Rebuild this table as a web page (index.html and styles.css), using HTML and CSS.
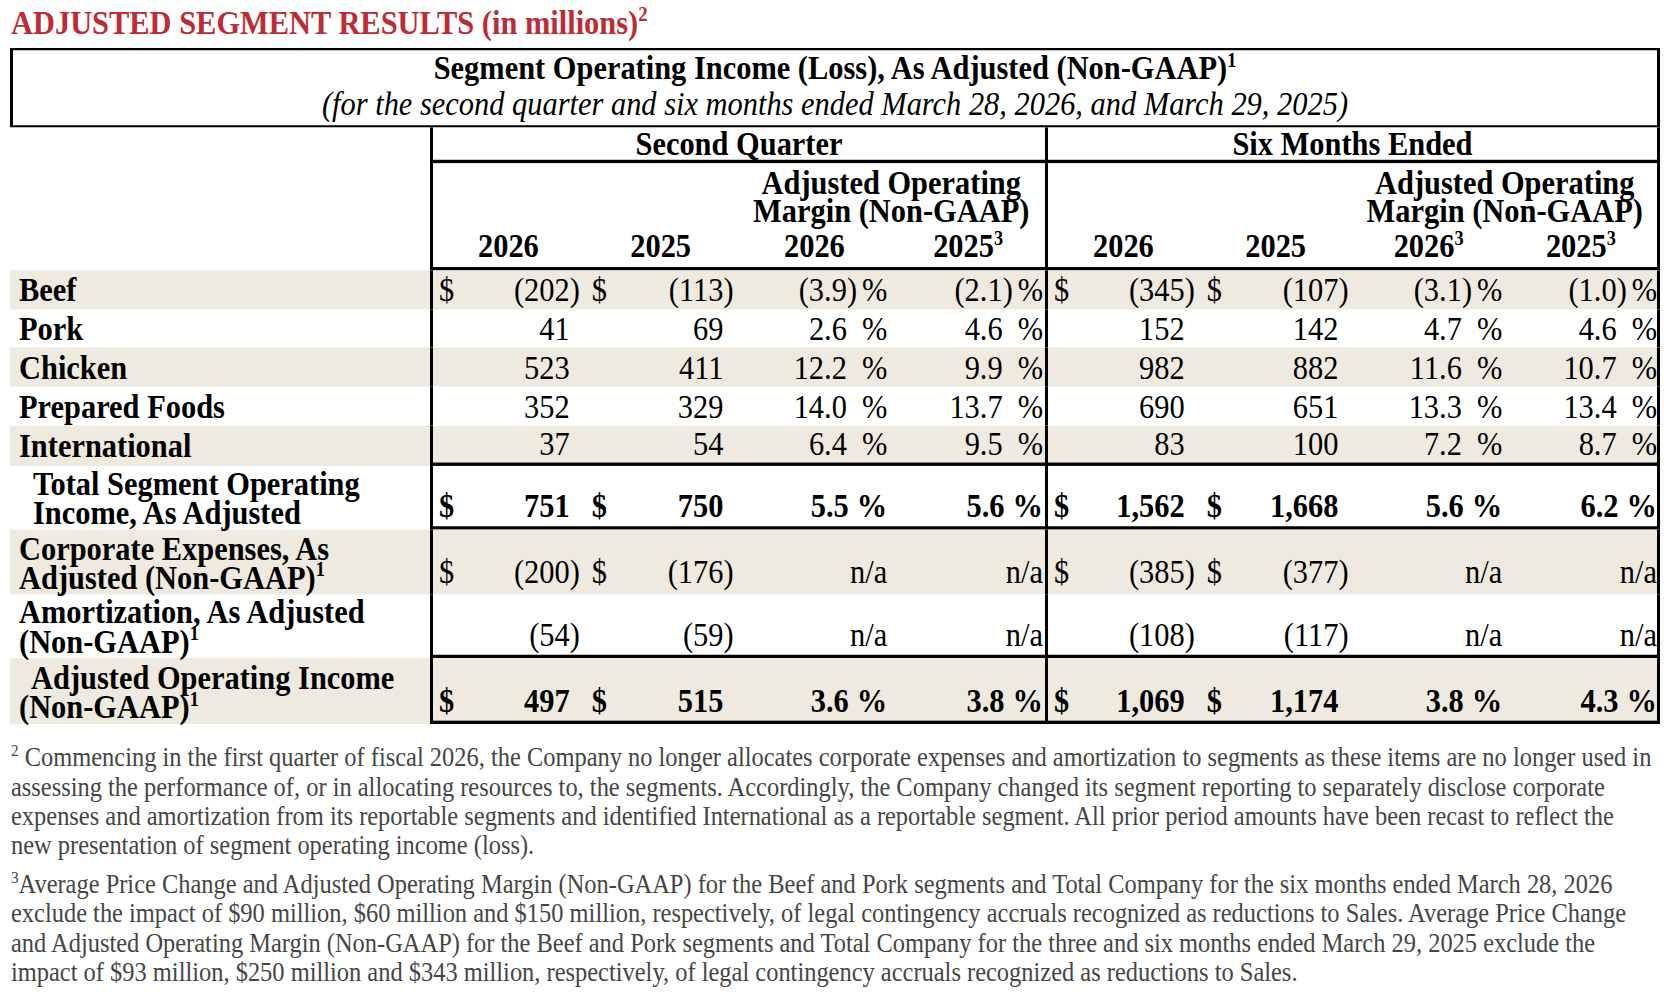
FILE: index.html
```html
<!DOCTYPE html>
<html lang="en">
<head>
<meta charset="utf-8">
<title>Adjusted Segment Results</title>
<link rel="stylesheet" href="styles.css">
</head>
<body>
<div class="page">
  <h1 class="title">ADJUSTED SEGMENT RESULTS (in millions)<sup>2</sup></h1>
  <table class="seg">
    <colgroup>
      <col class="c-label">
      <col class="c-num"><col class="c-num"><col class="c-num"><col class="c-num">
      <col class="c-num"><col class="c-num"><col class="c-num"><col class="c-num">
    </colgroup>
    <tr class="r-title">
      <td colspan="9" class="box">
        <div class="box-main">Segment Operating Income (Loss), As Adjusted (Non-GAAP)<sup>1</sup></div>
        <div class="box-sub">(for the second quarter and six months ended March 28, 2026, and March 29, 2025)</div>
      </td>
    </tr>
    <tr class="r-period">
      <td class="lbl"></td>
      <th colspan="4" class="period bl">Second Quarter</th>
      <th colspan="4" class="period bl br">Six Months Ended</th>
    </tr>
    <tr class="r-years">
      <td class="lbl"></td>
      <th class="yr bl">2026</th>
      <th class="yr">2025</th>
      <th colspan="2" class="yr">
        <div class="mg-title">Adjusted Operating<br>Margin (Non-GAAP)</div>
        <div class="mg-years"><span>2026</span><span>2025<sup>3</sup></span></div>
      </th>
      <th class="yr bl">2026</th>
      <th class="yr">2025</th>
      <th colspan="2" class="yr br">
        <div class="mg-title">Adjusted Operating<br>Margin (Non-GAAP)</div>
        <div class="mg-years"><span>2026<sup>3</sup></span><span>2025<sup>3</sup></span></div>
      </th>
    </tr>

    <tr class="row shade">
      <td class="lbl">Beef</td>
      <td class="amt bl"><span class="cur">$</span>(202<span class="rp">)</span></td>
      <td class="amt"><span class="cur">$</span>(113<span class="rp">)</span></td>
      <td class="mg"><span class="v">(3.9<span class="rp">)</span></span>%</td>
      <td class="mg end"><span class="v">(2.1<span class="rp">)</span></span>%</td>
      <td class="amt bl"><span class="cur">$</span>(345<span class="rp">)</span></td>
      <td class="amt"><span class="cur">$</span>(107<span class="rp">)</span></td>
      <td class="mg"><span class="v">(3.1<span class="rp">)</span></span>%</td>
      <td class="mg end br"><span class="v">(1.0<span class="rp">)</span></span>%</td>
    </tr>
    <tr class="row">
      <td class="lbl">Pork</td>
      <td class="amt bl">41</td>
      <td class="amt">69</td>
      <td class="mg"><span class="v">2.6</span>%</td>
      <td class="mg end"><span class="v">4.6</span>%</td>
      <td class="amt bl">152</td>
      <td class="amt">142</td>
      <td class="mg"><span class="v">4.7</span>%</td>
      <td class="mg end br"><span class="v">4.6</span>%</td>
    </tr>
    <tr class="row shade">
      <td class="lbl">Chicken</td>
      <td class="amt bl">523</td>
      <td class="amt">411</td>
      <td class="mg"><span class="v">12.2</span>%</td>
      <td class="mg end"><span class="v">9.9</span>%</td>
      <td class="amt bl">982</td>
      <td class="amt">882</td>
      <td class="mg"><span class="v">11.6</span>%</td>
      <td class="mg end br"><span class="v">10.7</span>%</td>
    </tr>
    <tr class="row">
      <td class="lbl">Prepared Foods</td>
      <td class="amt bl">352</td>
      <td class="amt">329</td>
      <td class="mg"><span class="v">14.0</span>%</td>
      <td class="mg end"><span class="v">13.7</span>%</td>
      <td class="amt bl">690</td>
      <td class="amt">651</td>
      <td class="mg"><span class="v">13.3</span>%</td>
      <td class="mg end br"><span class="v">13.4</span>%</td>
    </tr>
    <tr class="row shade sep r-last">
      <td class="lbl">International</td>
      <td class="amt bl">37</td>
      <td class="amt">54</td>
      <td class="mg"><span class="v">6.4</span>%</td>
      <td class="mg end"><span class="v">9.5</span>%</td>
      <td class="amt bl">83</td>
      <td class="amt">100</td>
      <td class="mg"><span class="v">7.2</span>%</td>
      <td class="mg end br"><span class="v">8.7</span>%</td>
    </tr>

    <tr class="tall sep strong">
      <td class="lbl ind">Total Segment Operating<br>Income, As Adjusted</td>
      <td class="amt bl"><span class="cur">$</span>751</td>
      <td class="amt"><span class="cur">$</span>750</td>
      <td class="mg"><span class="v">5.5</span>%</td>
      <td class="mg end"><span class="v">5.6</span>%</td>
      <td class="amt bl"><span class="cur">$</span>1,562</td>
      <td class="amt"><span class="cur">$</span>1,668</td>
      <td class="mg"><span class="v">5.6</span>%</td>
      <td class="mg end br"><span class="v">6.2</span>%</td>
    </tr>
    <tr class="tall shade open">
      <td class="lbl">Corporate Expenses, As<br>Adjusted (Non-GAAP)<sup>1</sup></td>
      <td class="amt bl"><span class="cur">$</span>(200<span class="rp">)</span></td>
      <td class="amt"><span class="cur">$</span>(176<span class="rp">)</span></td>
      <td class="mg na">n/a</td>
      <td class="mg end na">n/a</td>
      <td class="amt bl"><span class="cur">$</span>(385<span class="rp">)</span></td>
      <td class="amt"><span class="cur">$</span>(377<span class="rp">)</span></td>
      <td class="mg na">n/a</td>
      <td class="mg end br na">n/a</td>
    </tr>
    <tr class="tall sep">
      <td class="lbl">Amortization, As Adjusted<br>(Non-GAAP)<sup>1</sup></td>
      <td class="amt bl">(54<span class="rp">)</span></td>
      <td class="amt">(59<span class="rp">)</span></td>
      <td class="mg na">n/a</td>
      <td class="mg end na">n/a</td>
      <td class="amt bl">(108<span class="rp">)</span></td>
      <td class="amt">(117<span class="rp">)</span></td>
      <td class="mg na">n/a</td>
      <td class="mg end br na">n/a</td>
    </tr>
    <tr class="tall sep strong shade r-final">
      <td class="lbl hang">Adjusted Operating Income<br>(Non-GAAP)<sup>1</sup></td>
      <td class="amt bl"><span class="cur">$</span>497</td>
      <td class="amt"><span class="cur">$</span>515</td>
      <td class="mg"><span class="v">3.6</span>%</td>
      <td class="mg end"><span class="v">3.8</span>%</td>
      <td class="amt bl"><span class="cur">$</span>1,069</td>
      <td class="amt"><span class="cur">$</span>1,174</td>
      <td class="mg"><span class="v">3.8</span>%</td>
      <td class="mg end br"><span class="v">4.3</span>%</td>
    </tr>
  </table>

  <div class="notes">
    <p><sup>2</sup> Commencing in the first quarter of fiscal 2026, the Company no longer allocates corporate expenses and amortization to segments as these items are no longer used in<br>assessing the performance of, or in allocating resources to, the segments. Accordingly, the Company changed its segment reporting to separately disclose corporate<br>expenses and amortization from its reportable segments and identified International as a reportable segment. All prior period amounts have been recast to reflect the<br>new presentation of segment operating income (loss).</p>
    <p><sup>3</sup>Average Price Change and Adjusted Operating Margin (Non-GAAP) for the Beef and Pork segments and Total Company for the six months ended March 28, 2026<br>exclude the impact of $90 million, $60 million and $150 million, respectively, of legal contingency accruals recognized as reductions to Sales. Average Price Change<br>and Adjusted Operating Margin (Non-GAAP) for the Beef and Pork segments and Total Company for the three and six months ended March 29, 2025 exclude the<br>impact of $93 million, $250 million and $343 million, respectively, of legal contingency accruals recognized as reductions to Sales.</p>
  </div>
</div>
</body>
</html>
```

FILE: styles.css
```css
* { box-sizing: border-box; }

:root {
  /* the source uses a tall, condensed Times face: text is set at its
     true width and the page is stretched vertically by --s */
  --s: 1.1173;
}

html, body {
  margin: 0;
  padding: 0;
  background: #ffffff;
}

body {
  font-family: "Liberation Serif", "Times New Roman", serif;
  color: #000000;
  min-height: 100vh;
}

.page {
  width: 1664px;
  padding: calc(3px / var(--s)) 0 0 10px;
  transform: scaleY(var(--s));
  transform-origin: 0 0;
}

sup {
  font-size: 60%;
  line-height: 0;
  vertical-align: super;
}

.title {
  margin: 0 0 calc(5px / var(--s)) 1px;
  font-size: 30.43px;
  line-height: calc(40px / var(--s));
  font-weight: bold;
  color: #bd2b36;
}

.title sup {
  font-size: 62%;
}

/* ---------- table ---------- */
.seg {
  width: 1650px;
  table-layout: fixed;
  border-collapse: separate;
  border-spacing: 0;
  font-size: 30.43px;
}

.c-label { width: 420px; }
.c-num { width: 153.75px; }

.seg td,
.seg th {
  padding: 0;
  font-weight: normal;
}

.seg .bl { border-left: 3px solid #000; }
.seg .br { border-right: 3px solid #000; }

/* title box */
.r-title { height: calc(79px / var(--s)); }

.seg .box {
  border: 3px solid #000;
  border-top-width: calc(3px / var(--s));
  border-bottom-width: calc(3px / var(--s));
  padding-top: calc(1px / var(--s));
  text-align: center;
  vertical-align: top;
}

.box-main {
  font-weight: bold;
  line-height: calc(34px / var(--s));
}

.box-sub {
  font-style: italic;
  line-height: calc(38px / var(--s));
}

/* period header */
.r-period { height: calc(36px / var(--s)); }

.seg th.period {
  font-weight: bold;
  line-height: calc(27px / var(--s));
  padding-top: calc(4px / var(--s));
  text-align: center;
  vertical-align: top;
  border-bottom: 3px solid #000;
}

/* year header */
.r-years { height: calc(107px / var(--s)); }

.seg th.yr {
  font-weight: bold;
  line-height: calc(28px / var(--s));
  text-align: center;
  vertical-align: bottom;
  padding-bottom: calc(6px / var(--s));
  border-bottom: 3px solid #000;
}

.mg-title {
  margin-bottom: calc(7px / var(--s));
}

.mg-years {
  display: grid;
  grid-template-columns: 1fr 1fr;
}

/* data rows */
.row { height: calc(39px / var(--s)); }
.row.r-last { height: calc(40px / var(--s)); }

.row td {
  line-height: calc(36px / var(--s));
  vertical-align: middle;
}

.tall { height: calc(64px / var(--s)); }
.tall.r-final { height: calc(66px / var(--s)); }

.shade td { background: #efeadf; }

.sep td:not(.lbl) { border-bottom: 3px solid #000; }

.seg .lbl {
  font-weight: bold;
  padding-left: 9px;
  white-space: nowrap;
}

.seg .lbl.ind { padding-left: 23px; }
.seg .lbl.hang { text-indent: 12px; }

.seg .tall td {
  vertical-align: bottom;
  line-height: calc(29px / var(--s));
  padding-bottom: calc(4.5px / var(--s));
}

.seg .tall.open td { padding-bottom: calc(6.5px / var(--s)); }

.seg .tall td.lbl { padding-bottom: calc(1px / var(--s)); }

.seg .strong td { font-weight: bold; }

.seg .amt {
  text-align: right;
  padding-left: 8px;
  padding-right: 14px;
  white-space: nowrap;
}

.seg .amt.bl { padding-left: 6px; }

.cur { float: left; }

.rp { margin-right: -0.333em; }

.seg .mg {
  text-align: right;
  padding-right: 4px;
  white-space: nowrap;
}

.seg .mg.end { padding-right: 2px; }
.seg .mg.end.br { padding-right: 0; }

.v {
  display: inline-block;
  margin-right: 15px;
}

.strong .v { margin-right: 8px; }

/* ---------- notes ---------- */
.notes {
  margin-top: calc(19px / var(--s));
  font-size: 24.45px;
  line-height: calc(29.2px / var(--s));
  color: #454545;
  white-space: nowrap;
}

.notes p {
  margin: 0 0 calc(10px / var(--s)) 1px;
}

.notes sup {
  font-size: 62%;
}
```
